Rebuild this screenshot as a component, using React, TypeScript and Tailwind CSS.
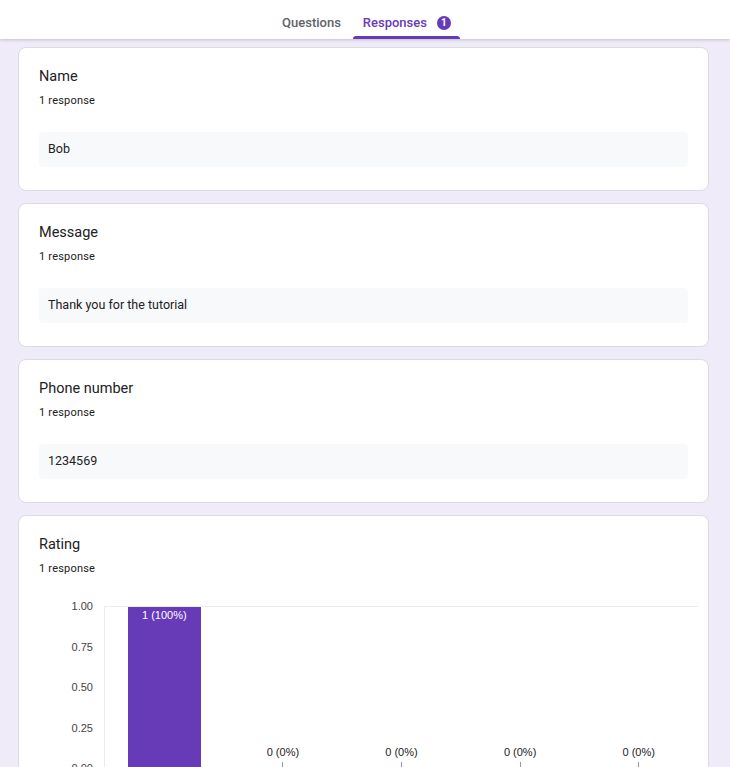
import React from 'react'

const font = { fontFamily: 'Roboto, "Noto Sans", Arial, sans-serif' }

function TextCard({ title, answer }: { title: string; answer: string }) {
  return (
    <div className="rounded-lg border border-[#dadce0] bg-white px-[20px] pt-[19px] pb-[23px]">
      <div className="text-[14.5px] leading-5 text-[#202124]">{title}</div>
      <div className="mt-[6px] text-[11px] leading-4 tracking-[0.2px] text-[#202124]">1 response</div>
      <div className="mt-[23px] flex h-[35px] items-center rounded bg-[#f8f9fa] px-[9px] text-[12.5px] text-[#202124]">
        {answer}
      </div>
    </div>
  )
}

function RatingChart() {
  const ticks = ['1.00', '0.75', '0.50', '0.25', '0.00']
  const cols = [1, 0, 0, 0, 0]
  return (
    <div className="mt-[29px] -mr-[10px] flex" style={{ fontFamily: '"Liberation Sans", Arial, sans-serif' }}>
      <div className="flex w-[54px] flex-col">
        {ticks.map((t) => (
          <div key={t} className="flex h-[40.5px] items-start justify-end text-[11px] leading-none text-[#444]">
            <span className="-mt-[5px]">{t}</span>
          </div>
        ))}
      </div>
      <div className="ml-[11px] grid h-[170px] flex-1 grid-cols-5 border-t border-l border-[#ececec]">
        {cols.map((v, i) => (
          <div key={i} className="flex flex-col items-center">
            {v ? (
              <div className="flex h-[162px] w-[73px] justify-center bg-[#673ab7] pt-[3px] text-[11px] leading-none text-white">
                1 (100%)
              </div>
            ) : (
              <div className="mt-[140px] flex flex-col items-center">
                <span className="text-[11px] leading-none text-[#222]">0 (0%)</span>
                <div className="mt-[4px] h-[14px] w-px bg-[#999]" />
              </div>
            )}
          </div>
        ))}
      </div>
    </div>
  )
}

export default function App() {
  return (
    <div className="h-[767px] overflow-hidden bg-[#f0ebf8]" style={font}>
      <header className="relative z-10 flex h-[39px] justify-center bg-white shadow-[0_1px_3px_rgba(60,64,67,0.25)]">
        <div className="flex items-stretch">
          <div className="flex items-center px-[12px] pt-[6px] text-[13px] font-medium text-[#5f6368]">Questions</div>
          <div className="relative flex items-center gap-[10px] pr-[9px] pl-[10px] pt-[6px] text-[13px] font-medium text-[#673ab7]">
            Responses
            <span className="flex h-[14px] w-[14px] items-center justify-center rounded-full bg-[#673ab7] text-[10px] font-bold text-white">
              1
            </span>
            <div className="absolute right-0 bottom-0 left-0 h-[3px] rounded-t bg-[#673ab7]" />
          </div>
        </div>
      </header>
      <main className="flex flex-col gap-[12px] pt-[8px] pr-[21px] pl-[18px]">
        <TextCard title="Name" answer="Bob" />
        <TextCard title="Message" answer="Thank you for the tutorial" />
        <TextCard title="Phone number" answer="1234569" />
        <div className="rounded-lg border border-[#dadce0] bg-white px-[20px] pt-[19px] pb-[23px]">
          <div className="text-[14.5px] leading-5 text-[#202124]">Rating</div>
          <div className="mt-[6px] text-[11px] leading-4 tracking-[0.2px] text-[#202124]">1 response</div>
          <RatingChart />
        </div>
      </main>
    </div>
  )
}
